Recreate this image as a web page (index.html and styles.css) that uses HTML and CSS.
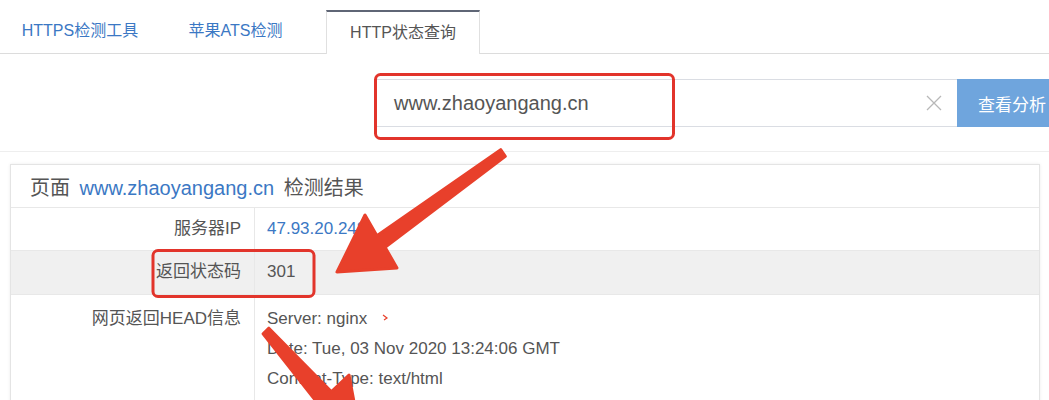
FILE: index.html
```html
<!DOCTYPE html>
<html lang="zh-CN">
<head>
    <meta charset="UTF-8">
    <title>HTTP状态查询</title>
    <link rel="stylesheet" href="styles.css">
</head>
<body>
    <div class="page">
        <div class="tabs">
            <a class="tab">HTTPS检测工具</a>
            <a class="tab">苹果ATS检测</a>
            <a class="tab active">HTTP状态查询</a>
        </div>

        <div class="search">
            <div class="search-input">
                <span class="search-text">www.zhaoyangang.cn</span>
                <svg class="clear" width="16" height="16" viewBox="0 0 16 16">
                    <path d="M1 1 L15 15 M15 1 L1 15" stroke="#b8b8b8" stroke-width="1.3" fill="none"/>
                </svg>
            </div>
            <button class="search-btn">查看分析</button>
        </div>

        <div class="result">
            <div class="result-head">
                页面 <span class="link">www.zhaoyangang.cn</span> 检测结果
            </div>
            <div class="row">
                <div class="label">服务器IP</div>
                <div class="value link">47.93.20.248</div>
            </div>
            <div class="row gray">
                <div class="label">返回状态码</div>
                <div class="value">301</div>
            </div>
            <div class="row head">
                <div class="label">网页返回HEAD信息</div>
                <div class="value">
                    <div>Server: nginx</div>
                    <div>Date: Tue, 03 Nov 2020 13:24:06 GMT</div>
                    <div>Content-Type: text/html</div>
                </div>
            </div>
        </div>

        <!-- annotation layer -->
        <svg class="marks" width="1049" height="400" viewBox="0 0 1049 400">
            <rect x="375.5" y="74.5" width="298" height="64" rx="5" fill="none" stroke="#e2342b" stroke-width="3"/>
            <rect x="153" y="250.5" width="161" height="46" rx="5" fill="none" stroke="#e2342b" stroke-width="3"/>
            <polygon points="500.7,149.7 376.9,235.8 365,215 337,272 397,268 385.1,247.2 505.3,156.3"
                     fill="#e8402b" stroke="#e8402b" stroke-width="3" stroke-linejoin="round"/>
            <polygon points="268.9,328.2 331.5,391.7 349,375 360,434 301,421 318.5,404.3 263.1,333.8"
                     fill="#e8402b" stroke="#e8402b" stroke-width="3" stroke-linejoin="round"/>
            <path d="M383 315 L387 318 L384 320" fill="none" stroke="#e8402b" stroke-width="1.2"/>
        </svg>
    </div>
</body>
</html>
```

FILE: styles.css
```css
* {
    margin: 0;
    padding: 0;
    box-sizing: border-box;
}

body {
    font-family: "Liberation Sans", "Noto Sans CJK SC", sans-serif;
    color: #555;
    background: #fff;
    width: 1049px;
    height: 400px;
    overflow: hidden;
}

.page {
    position: relative;
    height: 400px;
}

.tabs {
    display: flex;
    align-items: flex-end;
    height: 54px;
    padding-left: 2px;
    border-bottom: 1px solid #dcdcdc;
}

.tab {
    width: 156px;
    height: 43px;
    line-height: 42px;
    text-align: center;
    font-size: 16px;
    color: #3b78c4;
}

.tab + .tab {
    width: 155px;
}

.tab.active {
    width: 154px;
    margin-left: 13px;
    color: #555;
    background: #fff;
    border: 1px solid #e0e0e0;
    border-top: 2px solid #5f6676;
    border-bottom: none;
    height: 44px;
    margin-bottom: -1px;
}

.search {
    display: flex;
    height: 98px;
    padding: 25px 0 0 376px;
    border-bottom: 1px solid #eeeeee;
}

.search-input {
    display: flex;
    align-items: center;
    justify-content: space-between;
    flex-shrink: 0;
    width: 581px;
    height: 48px;
    padding: 0 15px 0 17px;
    border: 1px solid #dadde3;
    border-right: none;
}

.search-text {
    font-size: 20px;
    color: #555;
}

.search-btn {
    width: 110px;
    height: 48px;
    border: none;
    background: #6fa5dd;
    color: #fff;
    font-family: inherit;
    font-size: 17px;
    text-align: left;
    padding-left: 21px;
    flex-shrink: 0;
}

.result {
    margin: 12px 9px 0 10px;
    border: 1px solid #e4e4e4;
    box-shadow: 0 0 3px rgba(0, 0, 0, 0.08);
}

.result-head {
    height: 43px;
    padding-top: 3px;
    line-height: 40px;
    padding-left: 19px;
    font-size: 20px;
    color: #555;
    border-bottom: 1px solid #e8e8e8;
    word-spacing: 4px;
}

.link {
    color: #3b78c4;
    word-spacing: 0;
}

.row {
    display: flex;
    height: 43px;
    line-height: 42px;
    font-size: 17px;
    border-bottom: 1px solid #e8e8e8;
}

.row.gray {
    background: #f0f0f0;
    height: 44px;
}

.row.head {
    height: 120px;
    border-bottom: none;
    line-height: 30px;
}

.label {
    width: 244px;
    padding-right: 13px;
    text-align: right;
    border-right: 1px solid #e8e8e8;
    color: #555;
}

.value {
    padding-left: 12px;
    color: #555;
}

.value.link {
    color: #3b78c4;
}

.row.head .label,
.row.head .value {
    padding-top: 9px;
}

.marks {
    position: absolute;
    left: 0;
    top: 0;
    pointer-events: none;
}
```
